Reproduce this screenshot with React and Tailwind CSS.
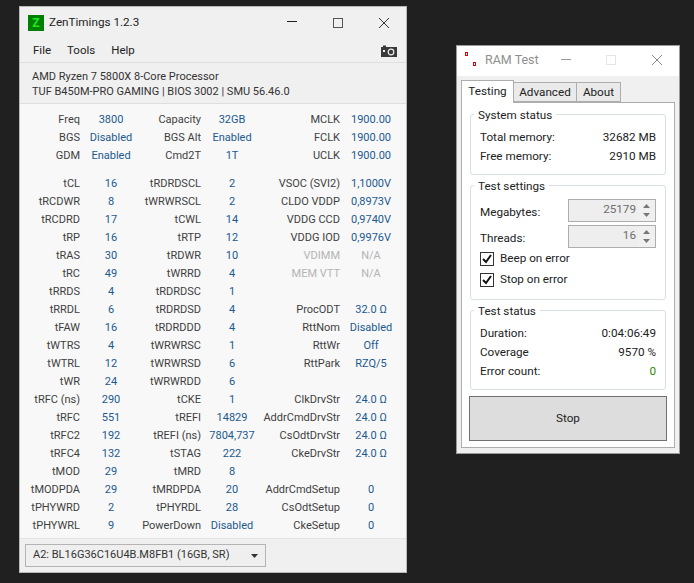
const FONT = { fontFamily: 'Roboto, "Open Sans", sans-serif' };

const top3 = [
  ["Freq", "3800", "Capacity", "32GB", "MCLK", "1900.00"],
  ["BGS", "Disabled", "BGS Alt", "Enabled", "FCLK", "1900.00"],
  ["GDM", "Enabled", "Cmd2T", "1T", "UCLK", "1900.00"],
];
const rows = [
  ["tCL", "16", "tRDRDSCL", "2", "VSOC (SVI2)", "1,1000V"],
  ["tRCDWR", "8", "tWRWRSCL", "2", "CLDO VDDP", "0,8973V"],
  ["tRCDRD", "17", "tCWL", "14", "VDDG CCD", "0,9740V"],
  ["tRP", "16", "tRTP", "12", "VDDG IOD", "0,9976V"],
  ["tRAS", "30", "tRDWR", "10", "VDIMM", "N/A", true],
  ["tRC", "49", "tWRRD", "4", "MEM VTT", "N/A", true],
  ["tRRDS", "4", "tRDRDSC", "1", "", ""],
  ["tRRDL", "6", "tRDRDSD", "4", "ProcODT", "32.0 Ω"],
  ["tFAW", "16", "tRDRDDD", "4", "RttNom", "Disabled"],
  ["tWTRS", "4", "tWRWRSC", "1", "RttWr", "Off"],
  ["tWTRL", "12", "tWRWRSD", "6", "RttPark", "RZQ/5"],
  ["tWR", "24", "tWRWRDD", "6", "", ""],
  ["tRFC (ns)", "290", "tCKE", "1", "ClkDrvStr", "24.0 Ω"],
  ["tRFC", "551", "tREFI", "14829", "AddrCmdDrvStr", "24.0 Ω"],
  ["tRFC2", "192", "tREFI (ns)", "7804,737", "CsOdtDrvStr", "24.0 Ω"],
  ["tRFC4", "132", "tSTAG", "222", "CkeDrvStr", "24.0 Ω"],
  ["tMOD", "29", "tMRD", "8", "", ""],
  ["tMODPDA", "29", "tMRDPDA", "20", "AddrCmdSetup", "0"],
  ["tPHYWRD", "2", "tPHYRDL", "28", "CsOdtSetup", "0"],
  ["tPHYWRL", "9", "PowerDown", "Disabled", "CkeSetup", "0"],
];

function Row({ r }) {
  const dim = r[6];
  return (
    <div className="grid grid-cols-[60px_62px_59px_62px_77px_62px] h-[18px] items-center leading-[18px] whitespace-nowrap">
      <span className="text-right text-[#3f3f3f]">{r[0]}</span>
      <span className="text-center text-[#1c5a8e]">{r[1]}</span>
      <span className="text-right text-[#3f3f3f] justify-self-end">{r[2]}</span>
      <span className="text-center text-[#1c5a8e]">{r[3]}</span>
      <span className={`justify-self-end text-right ${dim ? "text-[#b4b4b4]" : "text-[#3f3f3f]"}`}>{r[4]}</span>
      <span className={`text-center ${dim ? "text-[#b4b4b4]" : "text-[#1c5a8e]"}`}>{r[5]}</span>
    </div>
  );
}

function ZenWindow() {
  return (
    <div className="absolute left-[19px] top-[6px] w-[388px] h-[567px] bg-[#f0f0f0] border border-[#b9b9b9] flex flex-col text-[11px] text-[#333]" style={FONT}>
      <div className="h-[31px] flex items-center pl-[8px] shrink-0">
        <div className="w-[16px] h-[16px] bg-[#008000] flex items-center justify-center text-[#22e622] text-[12px] font-bold leading-none">Z</div>
        <span className="ml-[5px] text-[11.7px] text-[#222]">ZenTimings 1.2.3</span>
        <div className="ml-auto flex items-center">
          <svg width="12" height="12" className="mr-[34px]"><path d="M1 4.5h10" stroke="#222" /></svg>
          <svg width="12" height="12" className="mr-[34px]"><rect x="1.5" y="1.5" width="9" height="9" fill="none" stroke="#555" /></svg>
          <svg width="12" height="12" className="mr-[16px]"><path d="M1 1l10 10M11 1L1 11" stroke="#333" /></svg>
        </div>
      </div>
      <div className="h-[25px] flex items-center pl-[13px] pr-[9px] pt-[1px] gap-[16px] text-[11.5px] text-[#222] shrink-0 border-b border-[#dedede]">
        <span>File</span>
        <span>Tools</span>
        <span>Help</span>
        <svg width="16" height="12" viewBox="0 0 16 12" className="ml-auto">
          <path d="M0 2h2V0.5h3V2h11v10H0z" fill="#3a3a3a" />
          <rect x="2" y="5" width="2" height="2" fill="#f0f0f0" />
          <circle cx="10" cy="7" r="2.8" fill="none" stroke="#f0f0f0" strokeWidth="1.2" />
        </svg>
      </div>
      <div className="h-[41px] pl-[12px] pt-[6px] leading-[15px] text-[#333] shrink-0 border-b border-[#dedede] whitespace-nowrap">
        <div>AMD Ryzen 7 5800X 8-Core Processor</div>
        <div>TUF B450M-PRO GAMING | BIOS 3002 | SMU 56.46.0</div>
      </div>
      <div className="flex-1 bg-[#f8f8f8] pt-[7px]">
        {top3.map((r) => <Row key={r[0]} r={r} />)}
        <div className="h-[10px]" />
        {rows.map((r) => <Row key={r[0]} r={r} />)}
      </div>
      <div className="h-[34px] shrink-0 border-t border-[#e4e4e4] pt-[5px] pl-[5px] bg-[#f0f0f0]">
        <div className="w-[241px] h-[23px] bg-[#efefef] border border-[#b4b4b4] flex items-center pl-[7px] pr-[6px] text-[#333] whitespace-nowrap">
          <span>A2: BL16G36C16U4B.M8FB1 (16GB, SR)</span>
          <svg width="8" height="4" className="ml-auto"><path d="M0 0h7L3.5 4z" fill="#333" /></svg>
        </div>
      </div>
    </div>
  );
}

function Group({ title, className, children }) {
  return (
    <div className={`relative border border-[#d8dfe6] rounded-[3px] mx-[8px] ${className}`}>
      <span className="absolute left-[3px] top-[-8px] bg-white px-[4px] leading-[16px] text-[#222] whitespace-nowrap">{title}</span>
      {children}
    </div>
  );
}

function KV({ k, v, vc = "text-[#222]" }) {
  return (
    <div className="flex justify-between h-[19px] items-center whitespace-nowrap">
      <span>{k}</span>
      <span className={vc}>{v}</span>
    </div>
  );
}

function Spin({ label, value }) {
  return (
    <div className="flex items-center justify-between h-[22px] whitespace-nowrap">
      <span className="pt-[6px]">{label}</span>
      <div className="w-[88px] h-[23px] bg-[#eeeeee] border border-[#adadad] flex items-center justify-end text-[#6d6d6d]">
        <span className="mr-[1px]">{value}</span>
        <div className="w-[17px] h-full flex flex-col items-center justify-center gap-[5px] bg-[#f0f0f0] ml-[1px]">
          <svg width="7" height="4"><path d="M0 4h7L3.5 0z" fill="#777" /></svg>
          <svg width="7" height="4"><path d="M0 0h7L3.5 4z" fill="#777" /></svg>
        </div>
      </div>
    </div>
  );
}

function Check({ label }) {
  return (
    <div className="flex items-center h-[21px] whitespace-nowrap">
      <svg width="14" height="14" className="mr-[6px]">
        <rect x="0.5" y="0.5" width="13" height="13" fill="#fff" stroke="#333" />
        <path d="M3 7l3 3 5-7" fill="none" stroke="#111" strokeWidth="2" />
      </svg>
      <span>{label}</span>
    </div>
  );
}

function RamWindow() {
  return (
    <div className="absolute left-[456px] top-[45px] w-[224px] h-[409px] bg-[#f0f0f0] border border-[#9a9a9a] flex flex-col text-[11.7px] text-[#222]" style={FONT}>
      <div className="h-[30px] bg-white flex items-center shrink-0 pl-[8px] pb-[2px]">
        <svg width="11" height="14" className="mr-[9px] -mt-[2px]">
          <rect x="0" y="0" width="3" height="4" fill="#e00000" />
          <rect x="1" y="1" width="1" height="2" fill="#fff" />
          <rect x="8" y="10" width="3" height="4" fill="#e00000" />
          <rect x="9" y="11" width="1" height="2" fill="#fff" />
        </svg>
        <span className="text-[12.5px] text-[#8e8e8e]">RAM Test</span>
        <div className="ml-auto flex items-center">
          <svg width="12" height="12" className="mr-[33px]"><path d="M1 5.5h10" stroke="#999" /></svg>
          <svg width="12" height="12" className="mr-[34px]"><rect x="1.5" y="1.5" width="9" height="9" fill="none" stroke="#e4e4e4" /></svg>
          <svg width="12" height="12" className="mr-[16px]"><path d="M1 1l10 10M11 1L1 11" stroke="#888" /></svg>
        </div>
      </div>
      <div className="mx-[4px] mt-[4px] flex items-end h-[22px] shrink-0 relative z-10">
        <div className="w-[53px] h-[23px] mb-[-1px] bg-white border border-[#adadad] border-b-0 text-center leading-[20px]">Testing</div>
        <div className="w-[63px] h-[20px] bg-[#eaeaea] border border-[#adadad] border-l-0 text-center leading-[18px]">Advanced</div>
        <div className="w-[44px] h-[20px] bg-[#eaeaea] border border-[#adadad] border-l-0 text-center leading-[18px]">About</div>
      </div>
      <div className="mx-[4px] h-[346px] bg-white border border-[#adadad] pt-[11px]">
        <Group title="System status" className="h-[61px] pt-[13px] px-[9px] flex flex-col">
          <KV k="Total memory:" v="32682 MB" />
          <KV k="Free memory:" v="2910 MB" />
        </Group>
        <Group title="Test settings" className="mt-[10px] h-[115px] pt-[13px] pl-[9px] pr-[9px]">
          <Spin label="Megabytes:" value="25179" />
          <div className="h-[4px]" />
          <Spin label="Threads:" value="16" />
          <div className="h-[1px]" />
          <Check label="Beep on error" />
          <Check label="Stop on error" />
        </Group>
        <Group title="Test status" className="mt-[10px] h-[80px] pt-[13px] px-[9px]">
          <KV k="Duration:" v="0:04:06:49" />
          <KV k="Coverage" v="9570 %" />
          <KV k="Error count:" v="0" vc="text-[#2e8b00]" />
        </Group>
        <div className="mx-[7px] mt-[6px] h-[45px] bg-[#dddddd] border border-[#707070] flex items-center justify-center">Stop</div>
      </div>
    </div>
  );
}

export default function App() {
  return (
    <div className="relative w-[694px] h-[583px] bg-[#202020] overflow-hidden">
      <ZenWindow />
      <RamWindow />
    </div>
  );
}
